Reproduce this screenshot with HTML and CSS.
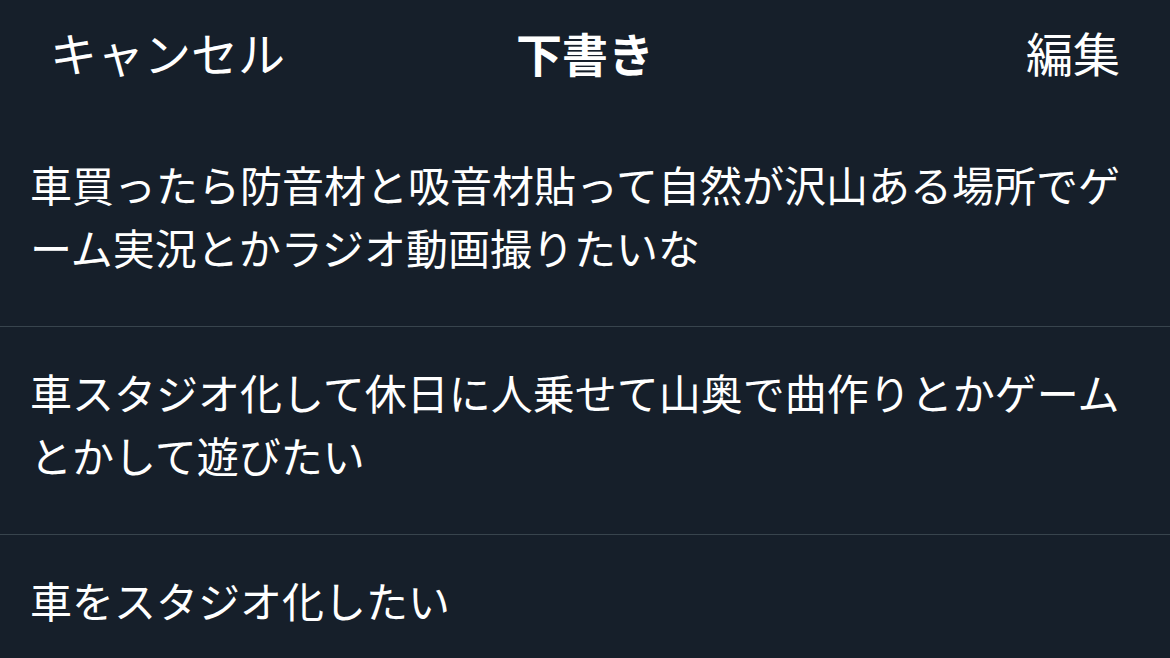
FILE: index.html
```html
<!DOCTYPE html>
<html lang="ja">
<head>
<meta charset="utf-8">
<title>下書き</title>
<link rel="stylesheet" href="styles.css">
</head>
<body>
<div class="sheet">
  <header class="header">
    <span class="action">キャンセル</span>
    <span class="title">下書き</span>
    <span class="action">編集</span>
  </header>
  <ul class="drafts">
    <li class="draft">車買ったら防音材と吸音材貼って自然が沢山ある場所でゲ<br>ーム実況とかラジオ動画撮りたいな</li>
    <li class="draft">車スタジオ化して休日に人乗せて山奥で曲作りとかゲーム<br>とかして遊びたい</li>
    <li class="draft">車をスタジオ化したい</li>
  </ul>
</div>
</body>
</html>
```

FILE: styles.css
```css
html, body {
  margin: 0;
  padding: 0;
  background: #151f2a;
}
body {
  width: 1170px;
  height: 658px;
  overflow: hidden;
  font-family: "Noto Sans CJK JP", "Noto Sans", sans-serif;
  color: #ffffff;
}
.sheet {
  background: #161f2a;
  height: 658px;
}
.header {
  height: 119px;
  box-sizing: border-box;
  padding: 24px 50px 0 50px;
  display: flex;
  justify-content: space-between;
  align-items: flex-start;
}
.action {
  font-size: 47px;
  line-height: 56px;
  font-weight: 400;
  flex: 0 0 260px;
}
.action:last-child {
  text-align: right;
}
.title {
  font-size: 46px;
  line-height: 56px;
  font-weight: 700;
  text-align: center;
}
.drafts {
  list-style: none;
  margin: 0;
  padding: 0;
}
.draft {
  font-size: 42px;
  line-height: 63px;
  padding: 33px 30px 48px 30px;
  border-bottom: 1px solid #38444d;
  white-space: nowrap;
}
```
